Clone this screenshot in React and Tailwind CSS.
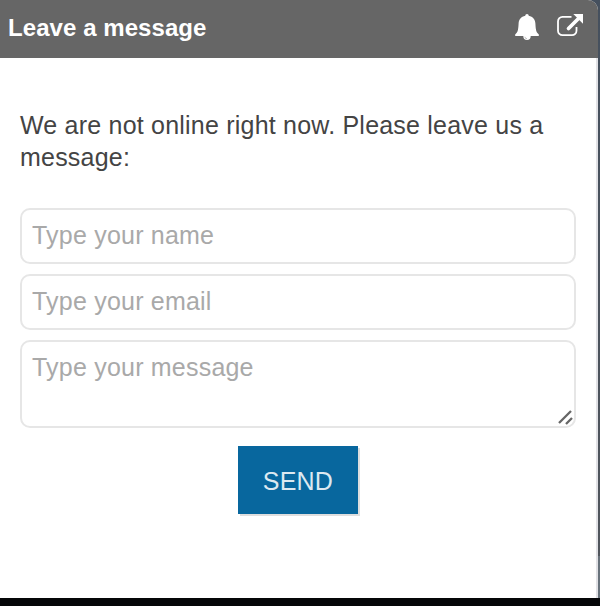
const FIELD =
  'block w-full rounded-[10px] border-2 border-[#e6e6e6] bg-white px-[10px] text-[25px] leading-[30px] tracking-[0.21px] text-[#444] outline-none placeholder:text-[#a9a9a9] placeholder:opacity-100';

function BellIcon() {
  return (
    <svg width="24" height="27" viewBox="0 0 24 27" fill="#fff" aria-hidden="true">
      <path d="M12 0c1 0 1.700.8 1.700 1.700C18 2.500 20.200 5.500 20.400 9.500c.3 5.800.6 8.500 3.200 10.700.6.600.5 1.800-.4 1.800H.8c-.9 0-1-1.200-.4-1.800 2.600-2.200 2.900-4.900 3.200-10.700C3.800 5.500 6 2.500 10.300 1.700 10.300.8 11 0 12 0Z" />
      <path d="M8.300 22h7.400a3.700 3.900 0 0 1-7.400 0Z" />
      <path d="M9.900 22.800a2 2 0 0 0 2.100 1.900" fill="none" stroke="#999" strokeWidth=".6" />
    </svg>
  );
}

function PopOutIcon() {
  return (
    <svg width="26" height="24" viewBox="0 0 26 24" fill="none" aria-hidden="true">
      <path
        d="M14.500 2.900H5.500A4.500 4.500 0 0 0 1 7.400v9.300A4.500 4.500 0 0 0 5.500 21.200h9.500a4.500 4.500 0 0 0 4.500-4.500V13"
        stroke="#fff"
        strokeWidth="1.800"
      />
      <path d="M11.500 14.500 21 5" stroke="#fff" strokeWidth="3.700" strokeLinecap="round" />
      <path d="M16.300 0H26v9.700Z" fill="#fff" />
    </svg>
  );
}

export default function App() {
  return (
    <div className="flex h-[606px] w-[600px] flex-col overflow-hidden bg-[#050608] font-['Liberation_Sans',Arial,sans-serif]">
      <div className="flex h-[598px] bg-linear-to-b from-[#45505e] from-0% via-[#50555c] via-[556px] to-[#68727b] to-[556px] pr-[2px]">
        <section className="flex w-[598px] flex-col overflow-hidden rounded-tr-[10px] bg-white">
          <header className="flex h-[58px] shrink-0 items-center justify-between bg-[#666] pr-[15px] pl-2">
            <h1 className="-mt-[2px] text-[24px] leading-[30px] font-bold tracking-[0.07px] text-white">
              Leave a message
            </h1>
            <div className="-mt-[4px] flex items-start gap-[18px]">
              <BellIcon />
              <PopOutIcon />
            </div>
          </header>
          <form
            className="flex flex-1 flex-col border-r-2 border-[#e1e1e5] pt-[51px] pr-5 pl-5"
            onSubmit={(e) => e.preventDefault()}
          >
            <p className="text-[25px] leading-8 tracking-[0.21px] text-[#444]">
              We are not online right now. Please leave us a message:
            </p>
            <div className="mt-[35px] flex flex-col gap-[10px]">
              <input className={`${FIELD} h-14 pb-[2px]`} placeholder="Type your name" />
              <input className={`${FIELD} h-14 pb-[2px]`} placeholder="Type your email" />
              <div className="relative">
                <textarea
                  className={`${FIELD} h-[88px] resize-none overflow-hidden pt-[10px]`}
                  placeholder="Type your message"
                />
                <svg
                  className="pointer-events-none absolute right-[3px] bottom-[3px]"
                  width="15"
                  height="15"
                  viewBox="0 0 15 15"
                  aria-hidden="true"
                >
                  <path d="M1 13 13 1M8 14l6-6" stroke="#666" strokeWidth="2.300" />
                </svg>
              </div>
            </div>
            <button
              className="mt-[18px] h-[68px] w-[120px] self-center bg-[#08679e] pt-[2px] text-[25px] leading-[30px] tracking-[0.2px] text-[#dce9f1] shadow-[2px_2px_0_#dedede]"
              type="submit"
            >
              SEND
            </button>
          </form>
        </section>
      </div>
    </div>
  );
}
